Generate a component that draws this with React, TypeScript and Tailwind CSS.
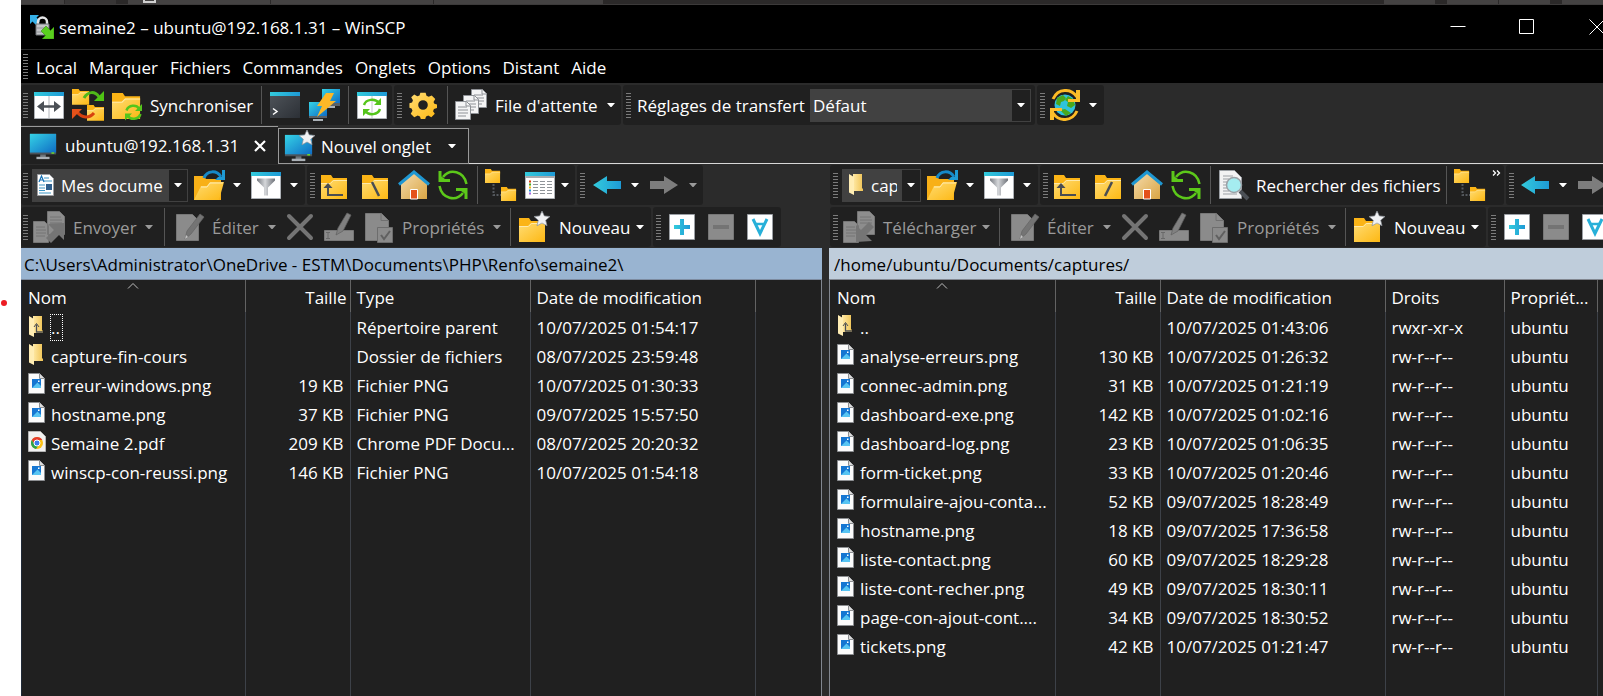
import React from "react";

type Kids = { children?: React.ReactNode };

/* ---------- icons ---------- */

function Svg({ children, size = "size-8", box = "0 0 32 32" }: Kids & { size?: string; box?: string }) {
  return (
    <svg viewBox={box} className={`${size} shrink-0`} fill="none" aria-hidden="true">
      {children}
    </svg>
  );
}

function Defs() {
  return (
    <svg className="absolute size-0" aria-hidden="true">
      <defs>
        <linearGradient id="gold" x1="0" y1="0" x2="1" y2="1">
          <stop offset="0" stopColor="#ffdc73" />
          <stop offset="1" stopColor="#fdb813" />
        </linearGradient>
        <linearGradient id="screen" x1="0" y1="0" x2="1" y2="1">
          <stop offset="0" stopColor="#35d3e6" />
          <stop offset="1" stopColor="#0f6cc4" />
        </linearGradient>
        <linearGradient id="cyan" x1="0" y1="0" x2="1" y2="0">
          <stop offset="0" stopColor="#33cbdc" />
          <stop offset="1" stopColor="#1e9ad6" />
        </linearGradient>
        <linearGradient id="steel" x1="0" y1="0" x2="1" y2="0">
          <stop offset="0" stopColor="#777b82" />
          <stop offset="0.45" stopColor="#d5d7da" />
          <stop offset="1" stopColor="#6d7178" />
        </linearGradient>
        <linearGradient id="slate" x1="0" y1="0" x2="1" y2="1">
          <stop offset="0" stopColor="#50555b" />
          <stop offset="1" stopColor="#2c3036" />
        </linearGradient>
        <linearGradient id="wall" x1="0" y1="0" x2="1" y2="1">
          <stop offset="0" stopColor="#f5dcae" />
          <stop offset="1" stopColor="#d9a544" />
        </linearGradient>
        <linearGradient id="manila" x1="0" y1="0" x2="1" y2="0">
          <stop offset="0" stopColor="#ffe9a6" />
          <stop offset="1" stopColor="#f0c455" />
        </linearGradient>
      </defs>
    </svg>
  );
}

function Folder({ x = 2, y = 4, s = 1 }: { x?: number; y?: number; s?: number }) {
  return (
    <g transform={`translate(${x} ${y}) scale(${s})`}>
      <path d="M0 0h10l2 3h14v6H0z" fill="#fbb416" />
      <path d="M0 24V8h9l3-3h14v19z" fill="url(#gold)" />
      <path d="M0 8.500h9.300l3-3H26" stroke="#ffe9a8" strokeWidth="1" />
    </g>
  );
}

const Star = () => (
  <path
    d="M23 0l2.300 4.900 5.700.600-4.300 3.700 1.300 5.600-5-2.800-5 2.800 1.300-5.600L15 5.500l5.700-.600z"
    fill="#f0f1f3"
    stroke="#8d9299"
    strokeWidth=".7"
  />
);

const Monitor = () => (
  <>
    <path d="M2 3h28v22H2z" fill="#4b5259" />
    <path d="M2 3h28v20H2z" fill="url(#screen)" />
    <path d="M25 23.500h3" stroke="#6fe02a" strokeWidth="1.500" />
    <path d="M13 25h6v3h-6z" fill="#6d747b" />
    <path d="M9 27.500h14V30H9z" fill="#aab0b6" />
  </>
);

const WinFrame = () => (
  <>
    <path d="M1.500 4h29v25.500h-29z" fill="#fff" stroke="#aeb2b7" />
    <path d="M1 3h30v4H1z" fill="url(#cyan)" />
  </>
);

const Icon = {
  app: () => (
    <Svg size="size-6" box="0 0 24 24">
      <path d="M0 0h9L6.500 2.500 10 6 6 10 2.500 6.500 0 9z" fill="#35b0e8" />
      <path d="M8 11V7a4.500 4.500 0 0 1 9 0v4" stroke="#e4e5e7" strokeWidth="2.500" />
      <path d="M6 9h13v11H6z" fill="#c3c5c8" stroke="#6f7276" />
      <path d="M6 13h13M6 17h13" stroke="#8f9296" />
      <path d="M13 14l3-3 4.500 4.500L24 12v12H12l3.500-3.500L11 16z" fill="#59cf1e" stroke="#2d7c0a" strokeWidth=".5" />
    </Svg>
  ),
  compare: () => (
    <Svg>
      <WinFrame />
      <path d="M16 7v22" stroke="#b5b8bc" />
      <path d="M8 17.500h16" stroke="#4b5056" strokeWidth="2.500" />
      <path d="M4 17.500l7-5.500v11zM28 17.500L21 12v11z" fill="#4b5056" />
    </Svg>
  ),
  syncBrowse: () => (
    <Svg>
      <Folder x={0} y={0} s={0.66} />
      <Folder x={15} y={16} s={0.66} />
      <path d="M12 9c4-7 11-7 15-1" stroke="#4fb81a" strokeWidth="3" />
      <path d="M32 2v10H22z" fill="#4fc414" />
      <path d="M22 24c-5 6-12 5-17-1" stroke="#d8410f" strokeWidth="3" />
      <path d="M0 30V20h10z" fill="#e5521a" />
    </Svg>
  ),
  sync: () => (
    <Svg>
      <Folder x={1} y={4} s={1.08} />
      <path d="M15.500 21.500c2-6 10-6 12.500-2M29.500 25c-2 6-10 6-12.500 2" stroke="#55c51b" strokeWidth="2.500" />
      <path d="M31 15v7h-7zM14 31.500v-7h7z" fill="#55c51b" />
    </Svg>
  ),
  terminal: () => (
    <Svg>
      <path d="M1 3h30v26H1z" fill="url(#slate)" />
      <path d="M1 3h30v4H1z" fill="url(#cyan)" />
      <path d="M4 19.500l4 3-4 3" stroke="#fff" strokeWidth="1.500" />
    </Svg>
  ),
  putty: () => (
    <Svg>
      <path d="M14 0h18v17H14z" fill="#596067" />
      <path d="M14 0h18v14H14z" fill="url(#screen)" />
      <path d="M20 17h7v2h-7z" fill="#aab0b6" />
      <path d="M1 13h18v16H1z" fill="#596067" />
      <path d="M1 13h18v14H1z" fill="url(#screen)" />
      <path d="M5 30h10v2H5z" fill="#aab0b6" />
      <path d="M18 4h8l-4 8h6L9 28l5-11H9z" fill="#fdb827" />
    </Svg>
  ),
  refreshWin: () => (
    <Svg>
      <WinFrame />
      <path d="M16 7v22" stroke="#c5c8cb" />
      <path d="M8 16c2-6 11-7 15-2M24 20c-2 6-11 7-15 2" stroke="#55c51b" strokeWidth="2.500" />
      <path d="M25 9v7h-7zM7 27v-7h7z" fill="#55c51b" />
    </Svg>
  ),
  gear: () => (
    <Svg>
      <g fill="url(#gold)">
        <path
          fillRule="evenodd"
          d="M13 2h6l1 3.500 2.500 1L26 5l4 4-2 3.500 1 2 3 1v4l-3.500 1-1 2.500 2 3-4 4-3.500-2-2.500 1-1 3h-5l-1-3-2.500-1L6 30l-4-4 2-3.500-1-2.500-2.500-1v-5L3.500 13l1-2.500L2.500 7 6 4l3.500 2 2.500-1zM16 10.500a5.500 5.500 0 1 0 0 11 5.500 5.500 0 0 0 0-11z"
          transform="translate(2 2) scale(.875)"
        />
      </g>
    </Svg>
  ),
  queue: () => (
    <Svg>
      {[
        [16, 0],
        [8, 6],
        [0, 12],
      ].map(([x, y]) => (
        <g key={x} transform={`translate(${x} ${y})`}>
          <path d="M.5 .5h11l4 4v14H.5z" fill="#f4f4f5" stroke="#8e9196" />
          <path d="M11 .5v4.500h4.500M3 6h9M3 9h10M3 12h10M3 15h8" stroke="#8e9196" />
        </g>
      ))}
    </Svg>
  ),
  world: () => (
    <Svg>
      <circle cx="16" cy="16" r="10.500" fill="#2fc3dc" />
      <path d="M8 9l6-3 3 3-2 3-3 1-1 4-4-2zM19 7l5 3 2 6-4 3-4-2 1-4-3-2zM11 21l5-1 6 4-5 3z" fill="#4aa81c" />
      <path d="M4 10C9-1 22-1 28 8M28 22C23 33 10 33 4 24" stroke="#fdbb25" strokeWidth="3" />
      <path d="M31 1v12H19v-3h8V1zM1 31V19h12v3H5v9z" fill="#fdc02c" />
    </Svg>
  ),
  monitor: () => (
    <Svg>
      <Monitor />
    </Svg>
  ),
  monitorNew: () => (
    <Svg>
      <g transform="translate(-1 2) scale(.97)">
        <Monitor />
      </g>
      <Star />
    </Svg>
  ),
  doc: () => (
    <Svg size="size-6" box="0 0 24 24">
      <path d="M3.500 1.500h12l4 4v17h-16z" fill="#fff" stroke="#9a9da1" />
      <path d="M10 5h5M10 8h8M5 20h12M5 12h6M5 15h6M5 17.500h6" stroke="#3c96c6" strokeWidth="1.200" />
      <path d="M5 9l2.500-6L10 9M6 7h3" stroke="#1470b5" strokeWidth="1.200" />
      <path d="M12 11h6v6h-6z" fill="#2e5e8c" />
    </Svg>
  ),
  openFolder: () => (
    <Svg>
      <path d="M1 7h10l2 3h15v21H1z" fill="#f8b017" />
      <path d="M1 31L8 17h6l3-4h14l-5 18z" fill="url(#gold)" />
      <path d="M8 18h6l3-4h13" stroke="#ffeab0" />
      <path d="M11 9c3-8 13-8 17-1" stroke="#1689c8" strokeWidth="3" />
      <path d="M32 1v10H22l3-3h4V1z" fill="#1f9bd5" />
    </Svg>
  ),
  filter: () => (
    <Svg>
      <WinFrame />
      <path d="M7 9.500h18v2l-7 7v8h-4v-8l-7-7z" fill="url(#steel)" />
    </Svg>
  ),
  up: () => (
    <Svg>
      <Folder x={3} y={6} />
      <path d="M10 17v9h15" stroke="#4a4d52" strokeWidth="2" />
      <path d="M10 14l4.500 5h-9z" fill="#4a4d52" />
    </Svg>
  ),
  rootLocal: () => (
    <Svg>
      <Folder x={3} y={6} />
      <path d="M13 13l7 14" stroke="#4a4d52" strokeWidth="2.500" />
    </Svg>
  ),
  rootRemote: () => (
    <Svg>
      <Folder x={3} y={6} />
      <path d="M20 13l-7 14" stroke="#4a4d52" strokeWidth="2.500" />
    </Svg>
  ),
  home: () => (
    <Svg>
      <path d="M3 14L16 3l13 11v16H3z" fill="url(#wall)" />
      <path d="M12.500 20.500h7V30h-7z" fill="#e4511b" stroke="#fff" />
      <path d="M1 15.500L16 3l15 12.500" stroke="#1f97d2" strokeWidth="3" />
    </Svg>
  ),
  refresh: () => (
    <Svg>
      <path d="M6 8C13-1 27 2 29.500 15M26 24C19 33 5 30 2.500 17" stroke="#5cc81a" strokeWidth="2.500" />
      <path d="M1.500 2h3v5.500L8 10h5v3H1.500zM30.500 30h-3v-5.500L24 22h-5v-3h11.500z" fill="#5cc81a" />
    </Svg>
  ),
  tree: () => (
    <Svg>
      <Folder x={0} y={0} s={0.58} />
      <Folder x={16} y={18} s={0.58} />
      <path d="M8.500 15v11H16" stroke="#55595e" strokeWidth="2" strokeDasharray="2 1.500" />
    </Svg>
  ),
  list: () => (
    <Svg>
      <WinFrame />
      <path d="M1.500 8h29" stroke="#a8acb0" strokeWidth="2" />
      <path d="M9 12.500h5m2 0h5m2 0h5M9 15.500h5m2 0h5m2 0h5M9 18.500h5m2 0h5m2 0h5M9 21.500h5m2 0h5m2 0h5M9 24.500h5m2 0h5m2 0h5" stroke="#8f9499" />
      <path d="M5 11.500h2v2H5z" fill="#d8410f" />
      <path d="M5 14.500h2v2H5z" fill="#4aa81c" />
      <path d="M5 17.500h2v2H5z" fill="#f4b41c" />
      <path d="M5 20.500h2v2H5z" fill="#2196d3" />
      <path d="M5 23.500h2v2H5z" fill="#a66be8" />
    </Svg>
  ),
  back: () => (
    <Svg>
      <path d="M2 16L16 7v5h14v8H16v5z" fill="url(#cyan)" />
    </Svg>
  ),
  forward: () => (
    <Svg>
      <path d="M30 16L16 7v5H2v8h14v5z" fill="#7d7d7d" />
    </Svg>
  ),
  send: () => (
    <Svg>
      <path d="M14.500 .5h12l5 5v18h-17zM.5 10.500h11l4 4v17H.5z" fill="#8d8d8d" stroke="#767676" />
      <path d="M17 6h11M17 9h12M17 12h12M3 16h9M3 19h10M3 22h10M3 25h9" stroke="#747474" />
      <path d="M31 12v17l-5-5-8 8-5-5 8-8-6-6z" fill="#757575" />
    </Svg>
  ),
  fetch: () => (
    <Svg>
      <path d="M14.500 .5h12l5 5v18h-17zM.5 10.500h11l4 4v17H.5z" fill="#8d8d8d" stroke="#767676" />
      <path d="M17 6h11M17 9h12M17 12h12M3 16h9M3 19h10M3 22h10M3 25h9" stroke="#747474" />
      <path d="M13 31V14l5 5 8-8 5 5-8 8 6 6z" fill="#757575" />
    </Svg>
  ),
  edit: () => (
    <Svg>
      <path d="M2.500 3.500h16l6 6v20h-22z" fill="#8b8b8b" stroke="#777" />
      <path d="M11 28l2-8L26 3l4 3-13 17z" fill="#747474" stroke="#646464" strokeWidth=".7" />
      <path d="M11 28l1-4 2 2z" fill="#c3c3c3" />
    </Svg>
  ),
  cross: () => (
    <Svg>
      <path d="M5 5l22 22M27 5L5 27" stroke="#747474" strokeWidth="4" strokeLinecap="round" />
    </Svg>
  ),
  rename: () => (
    <Svg>
      <path d="M1.500 19.500h29v10h-29z" fill="#8b8b8b" stroke="#777" />
      <path d="M3 21.500h4M3 27.500h4M5 22v5" stroke="#696969" />
      <path d="M13 24l2-7L24 2l4 2-8 16z" fill="#808080" stroke="#606060" strokeWidth=".7" />
    </Svg>
  ),
  props: () => (
    <Svg>
      <path d="M2.500 2.500h16l7 7v20h-23z" fill="#8b8b8b" stroke="#777" />
      <path d="M18 2.500V9.500h7" stroke="#707070" />
      <path d="M14.500 16.500h15v15h-15z" fill="#8b8b8b" stroke="#6d6d6d" />
      <path d="M18 24l3 4 6-8" stroke="#606060" strokeWidth="2" />
    </Svg>
  ),
  newFolder: () => (
    <Svg>
      <Folder x={0} y={7} />
      <Star />
    </Svg>
  ),
  plus: () => (
    <Svg>
      <path d="M3.500 3.500h25v25h-25z" fill="#fff" stroke="#9b9fa4" />
      <path d="M14 8h4v6h6v4h-6v6h-4v-6H8v-4h6z" fill="url(#cyan)" />
    </Svg>
  ),
  minus: () => (
    <Svg>
      <path d="M3.500 3.500h25v25h-25z" fill="#8b8b8b" stroke="#777" />
      <path d="M8 14h16v4H8z" fill="#747474" />
    </Svg>
  ),
  select: () => (
    <Svg>
      <path d="M3.500 3.500h25v25h-25z" fill="#fff" stroke="#9b9fa4" />
      <path d="M9 8l7 14.500L23 8" stroke="#27b0d9" strokeWidth="3" />
      <path d="M11 13h10" stroke="#27b0d9" strokeWidth="2.500" />
    </Svg>
  ),
  find: () => (
    <Svg>
      <path d="M1.500 1.500h15l7 7v21h-22z" fill="#f2f2f3" stroke="#9b9fa4" />
      <path d="M5 7h10M5 10h6M5 13h5M5 16h4M5 19h5M5 22h6M5 25h14" stroke="#9b9fa4" />
      <path d="M22 22l8 8" stroke="#4b5056" strokeWidth="4" />
      <circle cx="16" cy="16" r="7.500" fill="#a5ecf0" stroke="#9ba1a7" strokeWidth="1.500" />
    </Svg>
  ),
};

function FileIcon({ kind }: { kind: string }) {
  if (kind === "up" || kind === "dir")
    return (
      <Svg size="size-[22px]" box="0 0 22 22">
        <path d="M5 0h9v14l1 1v2H5z" fill="url(#manila)" />
        <path d="M1 0l5 3v18l-5-2.500z" fill="#ffedb4" />
        {kind === "up" && (
          <>
            <path d="M8.500 8.500V16H15" stroke="#4a4d52" strokeWidth="1.300" />
            <path d="M6 11l2.500-3.500L11 11" stroke="#4a4d52" />
          </>
        )}
      </Svg>
    );
  if (kind === "pdf")
    return (
      <Svg size="size-[22px]" box="0 0 22 22">
        <path d="M.5 .5h12l5 5v15H.5z" fill="#f1f1f1" stroke="#b5b5b5" />
        <circle cx="9" cy="12" r="6" fill="#fbc116" />
        <path d="M3.800 9A6 6 0 0 1 14.300 9H9l-3 4z" fill="#e33b2e" />
        <path d="M3.800 9A6 6 0 0 0 8 18l3-4.500-4.500 0z" fill="#2ba24c" />
        <circle cx="9" cy="12" r="3" fill="#3b7ded" stroke="#fff" />
      </Svg>
    );
  return (
    <Svg size="size-[22px]" box="0 0 22 22">
      <path d="M.5 .5h11l5 5v15H.5z" fill="#fbfbfb" stroke="#8d8f92" />
      <path d="M11.500 .5v5h5" stroke="#8d8f92" fill="#dcdcdc" />
      <path d="M4 6h9v9H4z" fill="#1576d2" />
      <path d="M4 15l5.500-5.500L13 13v2z" fill="#57c4f2" />
      <path d="M10 7.500h1.500V9H10z" fill="#fff" />
    </Svg>
  );
}

/* ---------- toolbar parts ---------- */

const Bar = ({ children, className = "pl-[3px]" }: Kids & { className?: string }) => (
  <div role="toolbar" className={`flex h-10 shrink-0 items-center rounded-[3px] bg-[#202020] ${className}`}>
    {children}
  </div>
);

const Grip = () => (
  <span className="h-[25px] w-[5px] shrink-0 bg-[repeating-linear-gradient(to_bottom,#7c7c7c_0_1px,transparent_1px_3px)]" />
);

const Sep = ({ className = "ml-2" }: { className?: string }) => (
  <span className={`h-[38px] w-px shrink-0 bg-[#555555] ${className}`} />
);

function Tool({
  icon,
  label,
  text,
  className = "ml-[7px]",
  textClass = "",
  gap = "gap-2",
  off,
}: {
  icon: keyof typeof Icon;
  label: string;
  text?: boolean;
  className?: string;
  textClass?: string;
  gap?: string;
  off?: boolean;
}) {
  const I = Icon[icon];
  return (
    <button
      type="button"
      aria-label={label}
      disabled={off}
      className={`flex shrink-0 items-center whitespace-nowrap text-left disabled:text-[#9a9a9a] ${gap} ${className}`}
    >
      <I />
      {text && <span className={`pt-[2px] ${textClass}`}>{label}</span>}
    </button>
  );
}

const Caret = ({ className = "ml-2", off, label }: { className?: string; off?: boolean; label: string }) => (
  <button type="button" aria-label={label} disabled={off} className={`shrink-0 text-white disabled:text-[#9a9a9a] ${className}`}>
    <svg viewBox="0 0 8 5" className="h-[5px] w-2" aria-hidden="true">
      <path d="M0 0h8L4.500 4h-1z" fill="currentColor" />
    </svg>
  </button>
);

function Combo({
  label,
  value,
  className,
  icon,
  pad = "pl-[3px]",
}: {
  label: string;
  value: string;
  className: string;
  icon?: React.ReactNode;
  pad?: string;
}) {
  return (
    <label className={`flex h-[33px] shrink-0 items-center bg-[#414141] ${className}`}>
      {icon}
      <select
        aria-label={label}
        className={`h-full min-w-0 flex-1 appearance-none overflow-hidden bg-[#414141] pt-[2px] outline-none ${pad}`}
        defaultValue={value}
      >
        <option>{value}</option>
      </select>
      <span className="ml-[5px] mr-px flex h-[31px] w-[18px] shrink-0 items-center justify-center bg-[#202020]">
        <svg viewBox="0 0 8 5" className="h-[5px] w-2" aria-hidden="true">
          <path d="M0 0h8L4.500 4h-1z" fill="#fff" />
        </svg>
      </span>
    </label>
  );
}

function EditTools({ remote }: { remote?: boolean }) {
  return (
    <div className="flex gap-[2px]">
      <Bar className={remote ? "pl-[3px] pr-[7px]" : "pl-[2px] pr-[7px]"}>
        <Grip />
        <Tool
          icon={remote ? "fetch" : "send"}
          label={remote ? "Télécharger" : "Envoyer"}
          text
          off
          className="ml-[5px]"
          textClass={remote ? "w-[90px]" : "w-[63px]"}
        />
        <Caret off label="Options de transfert" className="ml-[9px]" />
        <Sep className={remote ? "ml-[9px]" : "ml-[11px]"} />
        <Tool icon="edit" label="Éditer" text off className="ml-[9px]" gap="gap-[6px]" textClass="w-[48px]" />
        <Caret off label="Options d'édition" />
        <Tool icon="cross" label="Supprimer" off className="ml-2" />
        <Tool icon="rename" label="Renommer" off />
        <Tool icon="props" label="Propriétés" text off className="ml-2" gap="gap-[7px]" textClass="w-[83px]" />
        <Caret off label="Options de propriétés" />
        <Sep className="ml-[9px]" />
        <Tool icon="newFolder" label="Nouveau" text className="ml-2" textClass="w-[73px]" />
        <Caret label="Options de création" className="ml-1" />
      </Bar>
      <Bar className="pl-[3px] pr-[5px]">
        <Grip />
        <Tool icon="plus" label="Sélectionner" className="ml-[5px]" />
        <Tool icon="minus" label="Désélectionner" off />
        <Tool icon="select" label="Tout sélectionner" />
      </Bar>
    </div>
  );
}

/* ---------- file lists ---------- */

type Row = { kind: string; cells: string[] };
type Column = { title: string; width: string; right?: boolean };

function FileList({ columns, rows, focusFirst }: { columns: Column[]; rows: Row[]; focusFirst?: boolean }) {
  return (
    <table className="h-full w-full table-fixed border-collapse">
      <colgroup>
        {columns.map((c) => (
          <col key={c.title} className={c.width} />
        ))}
        <col />
      </colgroup>
      <thead>
        <tr className="h-[32px]">
          {columns.map((c, i) => (
            <th
              key={c.title}
              scope="col"
              className={`relative overflow-hidden whitespace-nowrap border-r border-[#636363] p-0 pt-[3px] font-normal ${c.right ? "pr-[3px] text-right" : "pl-[6px] text-left"}`}
            >
              {i === 0 && (
                <svg viewBox="0 0 12 6" className="absolute left-[105px] top-[3px] h-[6px] w-3" aria-hidden="true">
                  <path d="M1 5.500l5-5 5 5" stroke="#bdbdbd" fill="none" />
                </svg>
              )}
              {c.title}
            </th>
          ))}
          <td />
        </tr>
      </thead>
      <tbody>
        {rows.map((r) => (
          <tr key={r.cells[0]} className="h-[29px]">
            {r.cells.map((text, i) => (
              <td
                key={i}
                className={`overflow-hidden whitespace-nowrap border-r border-[#3d4148] p-0 ${i === 0 ? "" : "pt-[2px]"} ${columns[i].right ? "pr-[6px] text-right" : "pl-[6px]"}`}
              >
                {i === 0 ? (
                  <span className="flex items-start gap-px pt-px">
                    <FileIcon kind={r.kind} />
                    <span className={focusFirst && r.kind === "up" ? "-my-px outline outline-dotted outline-white pr-[2px] pt-px" : "pt-px"}>
                      {text}
                    </span>
                  </span>
                ) : (
                  text
                )}
              </td>
            ))}
            <td />
          </tr>
        ))}
        <tr>
          {columns.map((c) => (
            <td key={c.title} className="border-r border-[#3d4148]" />
          ))}
          <td />
        </tr>
      </tbody>
    </table>
  );
}

const localColumns: Column[] = [
  { title: "Nom", width: "w-[223px]" },
  { title: "Taille", width: "w-[105px]", right: true },
  { title: "Type", width: "w-[180px]" },
  { title: "Date de modification", width: "w-[225px]" },
];

const localRows: Row[] = [
  { kind: "up", cells: ["..", "", "Répertoire parent", "10/07/2025 01:54:17"] },
  { kind: "dir", cells: ["capture-fin-cours", "", "Dossier de fichiers", "08/07/2025 23:59:48"] },
  { kind: "png", cells: ["erreur-windows.png", "19 KB", "Fichier PNG", "10/07/2025 01:30:33"] },
  { kind: "png", cells: ["hostname.png", "37 KB", "Fichier PNG", "09/07/2025 15:57:50"] },
  { kind: "pdf", cells: ["Semaine 2.pdf", "209 KB", "Chrome PDF Docu...", "08/07/2025 20:20:32"] },
  { kind: "png", cells: ["winscp-con-reussi.png", "146 KB", "Fichier PNG", "10/07/2025 01:54:18"] },
];

const remoteColumns: Column[] = [
  { title: "Nom", width: "w-[224px]" },
  { title: "Taille", width: "w-[105px]", right: true },
  { title: "Date de modification", width: "w-[225px]" },
  { title: "Droits", width: "w-[119px]" },
  { title: "Propriét...", width: "w-[93px]" },
];

const remoteRows: Row[] = [
  ["..", "", "10/07/2025 01:43:06"],
  ["analyse-erreurs.png", "130 KB", "10/07/2025 01:26:32"],
  ["connec-admin.png", "31 KB", "10/07/2025 01:21:19"],
  ["dashboard-exe.png", "142 KB", "10/07/2025 01:02:16"],
  ["dashboard-log.png", "23 KB", "10/07/2025 01:06:35"],
  ["form-ticket.png", "33 KB", "10/07/2025 01:20:46"],
  ["formulaire-ajou-conta...", "52 KB", "09/07/2025 18:28:49"],
  ["hostname.png", "18 KB", "09/07/2025 17:36:58"],
  ["liste-contact.png", "60 KB", "09/07/2025 18:29:28"],
  ["liste-cont-recher.png", "49 KB", "09/07/2025 18:30:11"],
  ["page-con-ajout-cont....", "34 KB", "09/07/2025 18:30:52"],
  ["tickets.png", "42 KB", "10/07/2025 01:21:47"],
].map((c) => ({
  kind: c[0] === ".." ? "up" : "png",
  cells: [...c, c[0] === ".." ? "rwxr-xr-x" : "rw-r--r--", "ubuntu"],
}));

/* ---------- page ---------- */

const menus = ["Local", "Marquer", "Fichiers", "Commandes", "Onglets", "Options", "Distant", "Aide"];

export default function App() {
  return (
    <div className="flex h-screen overflow-hidden bg-white font-['Open_Sans','Noto_Sans',sans-serif] text-[17px] leading-6 text-white">
      <Defs />
      <div className="w-[21px] shrink-0 pl-px pt-[300px]">
        <div className="size-[6px] rounded-full bg-[#ec1c24]" />
      </div>

      <div className="flex min-w-0 flex-1 flex-col bg-[#2b2b2b]">
        <div className="flex h-[5px] shrink-0 border-b border-[#3c3a3a] bg-[#2b2929]">
          <span className="w-[43px] bg-[#444242]" />
          <span className="ml-px w-[51px] bg-[#383636]" />
          <span className="ml-3 flex w-[142px] bg-[#444242] pl-[15px]">
            <span className="h-[3px] w-[13px] border-x-2 border-b-2 border-[#d0d0d0]" />
          </span>
          <span className="ml-px w-[162px] bg-[#444242]" />
          <span className="ml-px w-[169px] bg-[#444242]" />
          <span className="ml-auto w-[51px] bg-[#444242]" />
          <span className="ml-3 w-[51px] bg-[#444242]" />
          <span className="ml-px w-[51px] bg-[#444242]" />
          <span className="ml-3 w-[41px] bg-[#444242]" />
        </div>

        <header className="flex h-[45px] shrink-0 items-center border-b border-[#2b2b2b] bg-black pl-[9px]">
          <Icon.app />
          <h1 className="ml-[5px] whitespace-nowrap pt-[2px]">semaine2 – ubuntu@192.168.1.31 – WinSCP</h1>
          <div className="ml-auto flex h-full">
            <button type="button" aria-label="Réduire" className="flex w-[69px] items-center justify-center">
              <svg viewBox="0 0 16 16" className="size-4">
                <path d="M.5 7.500h15" stroke="#fff" />
              </svg>
            </button>
            <button type="button" aria-label="Agrandir" className="flex w-[69px] items-center justify-center">
              <svg viewBox="0 0 16 16" className="size-4">
                <path d="M.5 .5h14v14H.5z" stroke="#fff" fill="none" />
              </svg>
            </button>
            <button type="button" aria-label="Fermer" className="flex w-[42px] items-center overflow-hidden pl-[28px]">
              <svg viewBox="0 0 16 16" className="size-4 shrink-0">
                <path d="M.5 .5l15 15M15.500 .5l-15 15" stroke="#fff" />
              </svg>
            </button>
          </div>
        </header>

        <nav className="flex h-[33px] shrink-0 items-center bg-black pl-[2px]">
          <Grip />
          <div className="ml-[8px] flex gap-3 pt-[2px]">
            {menus.map((m) => (
              <button key={m} type="button">
                {m}
              </button>
            ))}
          </div>
        </nav>

        <div className="mt-[2px] flex gap-[2px]">
          <Bar className="pl-[2px] pr-[4px]">
            <Grip />
            <Tool icon="compare" label="Comparer" className="ml-[5px]" />
            <Tool icon="syncBrowse" label="Navigation synchronisée" />
            <Tool icon="sync" label="Synchroniser" text gap="gap-[7px]" textClass="w-[103px]" />
            <Sep />
            <Tool icon="terminal" label="Terminal" />
            <Tool icon="putty" label="Ouvrir dans PuTTY" />
            <Sep />
            <Tool icon="refreshWin" label="Rafraîchir" />
          </Bar>
          <Bar className="pl-[3px] pr-[6px]">
            <Grip />
            <Tool icon="gear" label="Préférences" className="ml-[5px]" />
            <Sep />
            <Tool icon="queue" label="File d'attente" text textClass="w-[104px]" />
            <Caret label="Options de file" />
          </Bar>
          <Bar className="pl-[3px] pr-[4px]">
            <Grip />
            <span className="ml-[6px] w-[168px] whitespace-nowrap pt-[2px]">Réglages de transfert</span>
            <Combo label="Réglages de transfert" value="Défaut" className="ml-[5px] w-[221px]" />
          </Bar>
          <Bar className="pl-[3px] pr-[7px]">
            <Grip />
            <Tool icon="world" label="Terminer" className="ml-1" />
            <Caret label="Options" />
          </Bar>
        </div>

        <div className="mt-px flex h-[38px] shrink-0 items-end" role="tablist">
          <div className="flex h-[38px] w-[257px] shrink-0 items-center border-t border-[#9a9a9a] bg-[#202020] pl-[7px]">
            <button type="button" role="tab" aria-selected="true" className="flex items-center gap-[7px]">
              <Svg size="size-[30px]">
                <Monitor />
              </Svg>
              <span className="w-[180px] pt-px text-left">ubuntu@192.168.1.31</span>
            </button>
            <button type="button" aria-label="Fermer l'onglet" className="ml-[9px]">
              <svg viewBox="0 0 12 12" className="size-3">
                <path d="M1 1l10 10M11 1L1 11" stroke="#fff" strokeWidth="2.200" />
              </svg>
            </button>
          </div>
          <div className="flex h-9 w-[191px] shrink-0 items-center border border-[#9a9a9a] bg-[#202020] pl-[5px]">
            <Tool icon="monitorNew" label="Nouvel onglet" text className="ml-0" gap="gap-[5px]" textClass="w-[118px]" />
            <Caret label="Options d'onglet" className="ml-[9px]" />
          </div>
          <div className="h-px flex-1 bg-[#d8d8d8]" />
        </div>

        <div className="mt-px flex min-h-0 flex-1 gap-[7px]">
          <section aria-label="Local" className="flex min-w-0 flex-[801_1_0%] flex-col overflow-hidden">
            <div className="flex gap-[2px]">
              <Bar className="pl-[2px] pr-[7px]">
                <Grip />
                <Combo label="Lecteur local" value="Mes docume" className="ml-1 w-[156px] pl-[2px]" icon={<Icon.doc />} />
                <Tool icon="openFolder" label="Ouvrir un répertoire" className="ml-[5px]" />
                <Caret label="Répertoires récents" />
                <Tool icon="filter" label="Filtre" className="ml-[9px]" />
                <Caret label="Options de filtre" />
              </Bar>
              <Bar className="pl-[3px] pr-[6px]">
                <Grip />
                <Tool icon="up" label="Répertoire parent" className="ml-[3px]" />
                <Tool icon="rootLocal" label="Racine" className="ml-[9px]" />
                <Tool icon="home" label="Accueil" />
                <Tool icon="refresh" label="Rafraîchir" />
                <Sep />
                <Tool icon="tree" label="Arborescence" />
                <Tool icon="list" label="Affichage" />
                <Caret label="Options d'affichage" className="ml-[5px]" />
              </Bar>
              <Bar className="pl-[3px] pr-[6px]">
                <Grip />
                <Tool icon="back" label="Précédent" className="ml-[6px]" />
                <Caret label="Historique précédent" />
                <Tool icon="forward" label="Suivant" off className="ml-[9px]" />
                <Caret label="Historique suivant" off className="ml-[9px]" />
              </Bar>
            </div>
            <div className="mt-[2px]">
              <EditTools />
            </div>
            <div className="mt-px h-8 shrink-0 whitespace-nowrap border-b border-[#7d8ba0] bg-[#99b4d1] pl-[3px] pt-[5px] text-black">
              C:\Users\Administrator\OneDrive - ESTM\Documents\PHP\Renfo\semaine2\
            </div>
            <div className="grid min-h-0 flex-1 border-l border-r border-l-[#202a38] border-r-[#828790] bg-[#202020]">
              <FileList columns={localColumns} rows={localRows} focusFirst />
            </div>
          </section>

          <section aria-label="Distant" className="flex min-w-0 flex-[774_1_0%] flex-col overflow-hidden">
            <div className="flex gap-[2px] pl-px">
              <Bar className="pl-[3px] pr-[7px]">
                <Grip />
                <Combo
                  label="Répertoire distant"
                  value="cap"
                  className="ml-1 w-[79px] pl-[6px]"
                  pad="pl-px"
                  icon={<FileIcon kind="dir" />}
                />
                <Tool icon="openFolder" label="Ouvrir un répertoire" className="ml-[5px]" />
                <Caret label="Répertoires récents" />
                <Tool icon="filter" label="Filtre" className="ml-[9px]" />
                <Caret label="Options de filtre" />
              </Bar>
              <Bar className="pl-[3px] pr-[3px]">
                <Grip />
                <Tool icon="up" label="Répertoire parent" className="ml-[3px]" />
                <Tool icon="rootRemote" label="Racine" className="ml-[9px]" />
                <Tool icon="home" label="Accueil" />
                <Tool icon="refresh" label="Rafraîchir" />
                <Sep />
                <Tool icon="find" label="Rechercher des fichiers" text gap="gap-[6px]" textClass="w-[183px]" />
                <Sep className="ml-[7px]" />
                <Tool icon="tree" label="Arborescence" />
                <button type="button" aria-label="Plus" className="mb-6 ml-[6px]">
                  <svg viewBox="0 0 9 6" className="h-[6px] w-[9px]">
                    <path d="M1 .5l2.500 2.500L1 5.500M5 .5l2.500 2.500L5 5.500" stroke="#fff" strokeWidth="1.300" fill="none" />
                  </svg>
                </button>
              </Bar>
              <Bar className="pl-[3px] pr-[6px]">
                <Grip />
                <Tool icon="back" label="Précédent" className="ml-[5px]" />
                <Caret label="Historique précédent" />
                <Tool icon="forward" label="Suivant" off className="ml-[9px]" />
              </Bar>
            </div>
            <div className="mt-[2px] pl-px">
              <EditTools remote />
            </div>
            <div className="mt-px h-8 shrink-0 whitespace-nowrap border-b border-[#828790] bg-[#bfcddb] pl-[5px] pt-[5px] text-black">
              /home/ubuntu/Documents/captures/
            </div>
            <div className="grid min-h-0 flex-1 border-l border-[#828790] bg-[#202020] pl-px">
              <FileList columns={remoteColumns} rows={remoteRows} />
            </div>
          </section>
        </div>
      </div>
    </div>
  );
}
